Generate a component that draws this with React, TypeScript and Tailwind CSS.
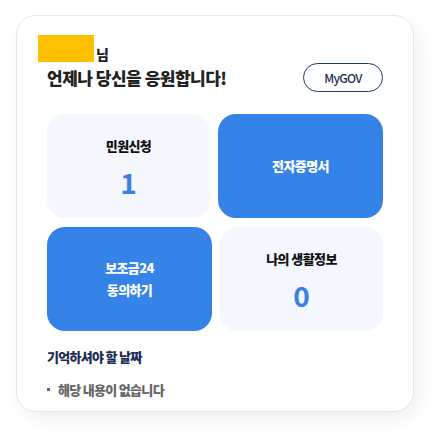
export default function App() {
  const font = { fontFamily: '"Noto Sans CJK KR", "Noto Sans", sans-serif' }

  return (
    <div className="min-h-screen bg-white pl-4 pt-[15px]" style={font}>
      <div className="w-[398px] h-[397px] rounded-[20px] border border-[#e4e6ea] bg-white shadow-[6px_8px_18px_rgba(0,0,0,0.06)] px-[30px] pt-[19px]">
        <div className="flex items-end">
          <div className="-ml-[9px] h-[27px] w-[56px] bg-[#ffc000]" />
          <span className="ml-[2px] mb-[1px] text-[14px] font-black leading-none text-[#222]">님</span>
        </div>

        <div className="mt-[1px] flex items-center justify-between">
          <p className="text-[17px] font-black tracking-[-0.5px] text-[#222]">언제나 당신을 응원합니다!</p>
          <button className="h-[29px] w-[80px] rounded-full border border-[#1d3a6e] text-[12px] font-medium tracking-[-0.7px] text-[#1d2d50]">
            MyGOV
          </button>
        </div>

        <div className="mt-[22px] flex flex-col gap-[9px]">
          <div className="flex gap-[8px]">
            <div className="flex h-[104px] w-[163px] flex-col items-center justify-center rounded-[18px] bg-[#f4f7fe]">
              <span className="text-[13px] font-black tracking-[-0.6px] text-[#111]">민원신청</span>
              <span className="mt-[12px] text-[28px] font-bold leading-none text-[#3a7fe2]">1</span>
            </div>
            <div className="flex h-[104px] w-[165px] items-center justify-center rounded-[18px] bg-[#3583e7]">
              <span className="text-[13px] font-black tracking-[-0.6px] text-white">전자증명서</span>
            </div>
          </div>
          <div className="flex gap-[8px]">
            <div className="flex h-[104px] w-[165px] flex-col items-center justify-center rounded-[18px] bg-[#3583e7] text-[13px] font-black leading-[22px] tracking-[-0.6px] text-white">
              <span>보조금24</span>
              <span>동의하기</span>
            </div>
            <div className="flex h-[104px] w-[163px] flex-col items-center justify-center rounded-[18px] bg-[#f4f7fe]">
              <span className="text-[13px] font-black tracking-[-0.6px] text-[#111]">나의 생활정보</span>
              <span className="mt-[12px] text-[28px] font-bold leading-none text-[#3a7fe2]">0</span>
            </div>
          </div>
        </div>

        <p className="mt-[16px] text-[13px] font-black tracking-[-0.7px] text-[#1c2b55]">기억하셔야 할 날짜</p>
        <div className="mt-[13px] flex items-center text-[13px] font-black tracking-[-0.7px] text-[#666]">
          <span className="mr-[8px] h-[3px] w-[3px] bg-[#666]" />
          해당 내용이 없습니다
        </div>
      </div>
    </div>
  )
}
